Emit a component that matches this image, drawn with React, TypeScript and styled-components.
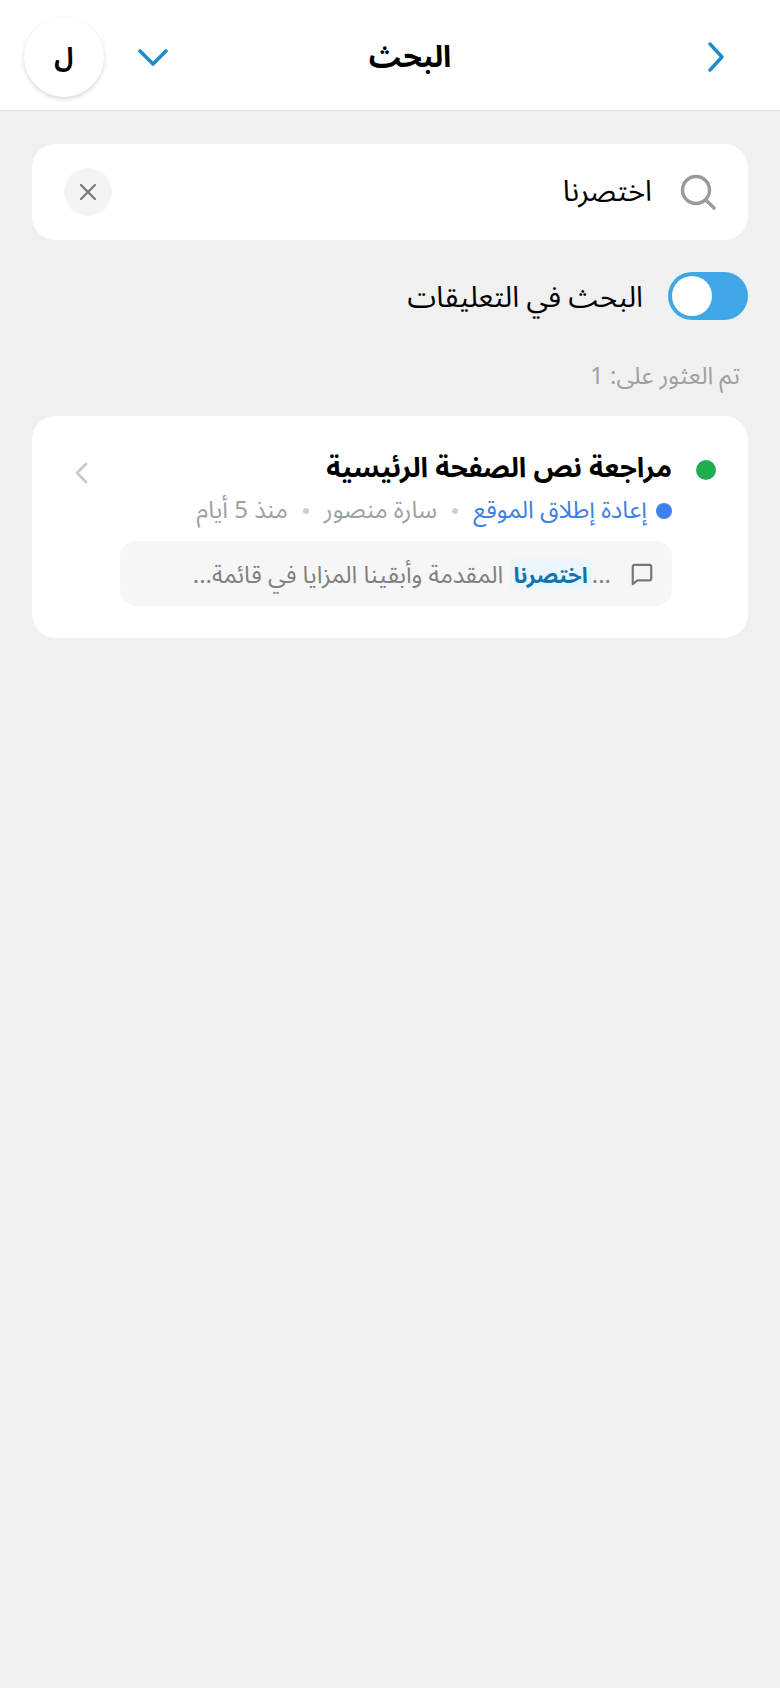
import styled, { createGlobalStyle } from "styled-components";

const GlobalStyle = createGlobalStyle`
  html, body {
    margin: 0;
    padding: 0;
    background: #f0f0f0;
  }
  body {
    font-family: "Noto Sans", "Noto Sans Arabic", "DejaVu Sans", sans-serif;
  }
`;

const Page = styled.div`
  direction: rtl;
  width: 780px;
  height: 1688px;
  background: #f0f0f0;
`;

const Header = styled.header`
  height: 110px;
  box-sizing: content-box;
  background: #fff;
  border-bottom: 1px solid #e4e4e4;
  display: flex;
  align-items: center;
  justify-content: space-between;
  padding: 0 24px;
`;

const BackSlot = styled.div`
  width: 104px;
  display: flex;
  padding: 4px 30px 0 0;
  box-sizing: border-box;
`;

const HeaderEnd = styled.div`
  display: flex;
  align-items: center;
  flex-direction: row-reverse;
  gap: 34px;
  padding-top: 4px;
`;

const Title = styled.h1`
  margin: 0;
  padding-top: 2px;
  font-size: 30px;
  line-height: 44px;
  font-weight: 700;
  color: #000;
`;

const Avatar = styled.div`
  width: 80px;
  height: 80px;
  border-radius: 50%;
  background: #fff;
  box-shadow: 0 2px 4px rgba(0, 0, 0, 0.16);
  display: flex;
  align-items: center;
  justify-content: center;
  font-size: 26px;
  font-weight: 700;
  color: #000;
`;

const Content = styled.main`
  padding: 33px 32px 0;
  display: flex;
  flex-direction: column;
`;

const SearchCard = styled.div`
  height: 96px;
  background: #fff;
  border-radius: 24px;
  display: flex;
  align-items: center;
  padding: 0 32px;
  gap: 28px;
`;

const SearchText = styled.span`
  flex: 1;
  margin-bottom: 4px;
  font-size: 29px;
  line-height: 40px;
  color: #000;
`;

const ClearButton = styled.button`
  width: 48px;
  height: 48px;
  border: 0;
  border-radius: 50%;
  background: #f4f4f4;
  padding: 0;
  display: flex;
  align-items: center;
  justify-content: center;
`;

const ToggleRow = styled.div`
  display: flex;
  align-items: center;
  gap: 25px;
  margin-top: 32px;
`;

const Toggle = styled.div`
  width: 80px;
  height: 48px;
  border-radius: 24px;
  background: #3fa7e5;
  display: flex;
  align-items: center;
  justify-content: flex-end;
  padding: 0 4px;
  box-sizing: border-box;
`;

const Knob = styled.div`
  width: 40px;
  height: 40px;
  border-radius: 50%;
  background: #fff;
`;

const ToggleLabel = styled.span`
  font-size: 29px;
  line-height: 48px;
  color: #000;
`;

const ResultCount = styled.div`
  margin-top: 38px;
  padding-right: 8px;
  font-size: 24px;
  line-height: 34px;
  color: #a0a0a0;
`;

const ResultCard = styled.article`
  margin-top: 24px;
  height: 222px;
  box-sizing: border-box;
  background: #fff;
  border-radius: 24px;
  padding: 32px 32px 0 42px;
  display: flex;
  gap: 24px;
`;

const StatusDot = styled.span`
  flex: none;
  width: 20px;
  height: 20px;
  margin-top: 12px;
  border-radius: 50%;
  background: #22ac52;
`;

const ResultBody = styled.div`
  flex: 1;
  min-width: 0;
`;

const TitleRow = styled.div`
  display: flex;
  align-items: flex-start;
  justify-content: space-between;
  height: 44px;

  svg {
    margin-top: 14px;
  }
`;

const ResultTitle = styled.h2`
  margin: 0;
  font-size: 27.5px;
  line-height: 38px;
  font-weight: 700;
  color: #000;
`;

const Meta = styled.div`
  display: flex;
  align-items: center;
  gap: 15px;
  height: 36px;
  margin-top: 1px;
  font-size: 24px;
  line-height: 32px;
  color: #a0a0a0;
`;

const MetaText = styled.span`
  margin-bottom: 4px;
`;

const Project = styled.span`
  display: flex;
  align-items: center;
  gap: 9px;
  color: #3f80e4;
`;

const ProjectDot = styled.span`
  width: 16px;
  height: 16px;
  border-radius: 50%;
  background: #3f80f0;
`;

const Sep = styled.span`
  width: 6px;
  height: 6px;
  border-radius: 50%;
  background: #cfcfcf;
`;

const Snippet = styled.div`
  margin: 12px 0 0 46px;
  height: 65px;
  border-radius: 16px;
  background: #f6f6f6;
  display: flex;
  align-items: center;
  gap: 19px;
  padding: 0 18px;
  font-size: 24px;
  line-height: 30px;
  color: #808080;
`;

const Mark = styled.mark`
  display: inline-block;
  background: #ebf5fc;
  color: #0f76ad;
  font-size: 22px;
  font-weight: 700;
  padding: 0 4px;
  border-radius: 4px;
`;

export default function App() {
  return (
    <Page>
      <GlobalStyle />
      <Header>
        <BackSlot>
          <svg width="20" height="30" viewBox="0 0 20 30" fill="none" stroke="#1c8ccc" strokeWidth="3.4" strokeLinecap="round" strokeLinejoin="round">
            <path d="M4 2l12 13L4 28" />
          </svg>
        </BackSlot>
        <Title>البحث</Title>
        <HeaderEnd>
          <Avatar>ل</Avatar>
          <svg width="30" height="20" viewBox="0 0 30 20" fill="none" stroke="#1c8ccc" strokeWidth="3.6" strokeLinecap="round" strokeLinejoin="round">
            <path d="M2 4l13 13L28 4" />
          </svg>
        </HeaderEnd>
      </Header>
      <Content>
        <SearchCard>
          <svg width="36" height="36" viewBox="0 0 36 36" fill="none" stroke="#9a9a9a" strokeWidth="3.4" strokeLinecap="round">
            <circle cx="16" cy="16" r="13.5" />
            <path d="M26 26l8 8" />
          </svg>
          <SearchText>اختصرنا</SearchText>
          <ClearButton>
            <svg width="20" height="20" viewBox="0 0 20 20" fill="none" stroke="#777" strokeWidth="2.2" strokeLinecap="round">
              <path d="M3 3l14 14M17 3L3 17" />
            </svg>
          </ClearButton>
        </SearchCard>
        <ToggleRow>
          <Toggle>
            <Knob />
          </Toggle>
          <ToggleLabel>البحث في التعليقات</ToggleLabel>
        </ToggleRow>
        <ResultCount>تم العثور على: 1</ResultCount>
        <ResultCard>
          <StatusDot />
          <ResultBody>
            <TitleRow>
              <ResultTitle>مراجعة نص الصفحة الرئيسية</ResultTitle>
              <svg width="14" height="22" viewBox="0 0 14 22" fill="none" stroke="#c8c8c8" strokeWidth="2.6" strokeLinecap="round" strokeLinejoin="round">
                <path d="M12 2L3 11l9 9" />
              </svg>
            </TitleRow>
            <Meta>
              <Project>
                <ProjectDot />
                <MetaText>إعادة إطلاق الموقع</MetaText>
              </Project>
              <Sep />
              <MetaText>سارة منصور</MetaText>
              <Sep />
              <MetaText>منذ 5 أيام</MetaText>
            </Meta>
            <Snippet>
              <svg width="24" height="24" viewBox="0 0 26 26" fill="none" stroke="#777" strokeWidth="2.4" strokeLinejoin="round">
                <path d="M3 24V5a2 2 0 0 1 2-2h16a2 2 0 0 1 2 2v13a2 2 0 0 1-2 2H8z" />
              </svg>
              <span>
                ...<Mark>اختصرنا</Mark> المقدمة وأبقينا المزايا في قائمة...
              </span>
            </Snippet>
          </ResultBody>
        </ResultCard>
      </Content>
    </Page>
  );
}
